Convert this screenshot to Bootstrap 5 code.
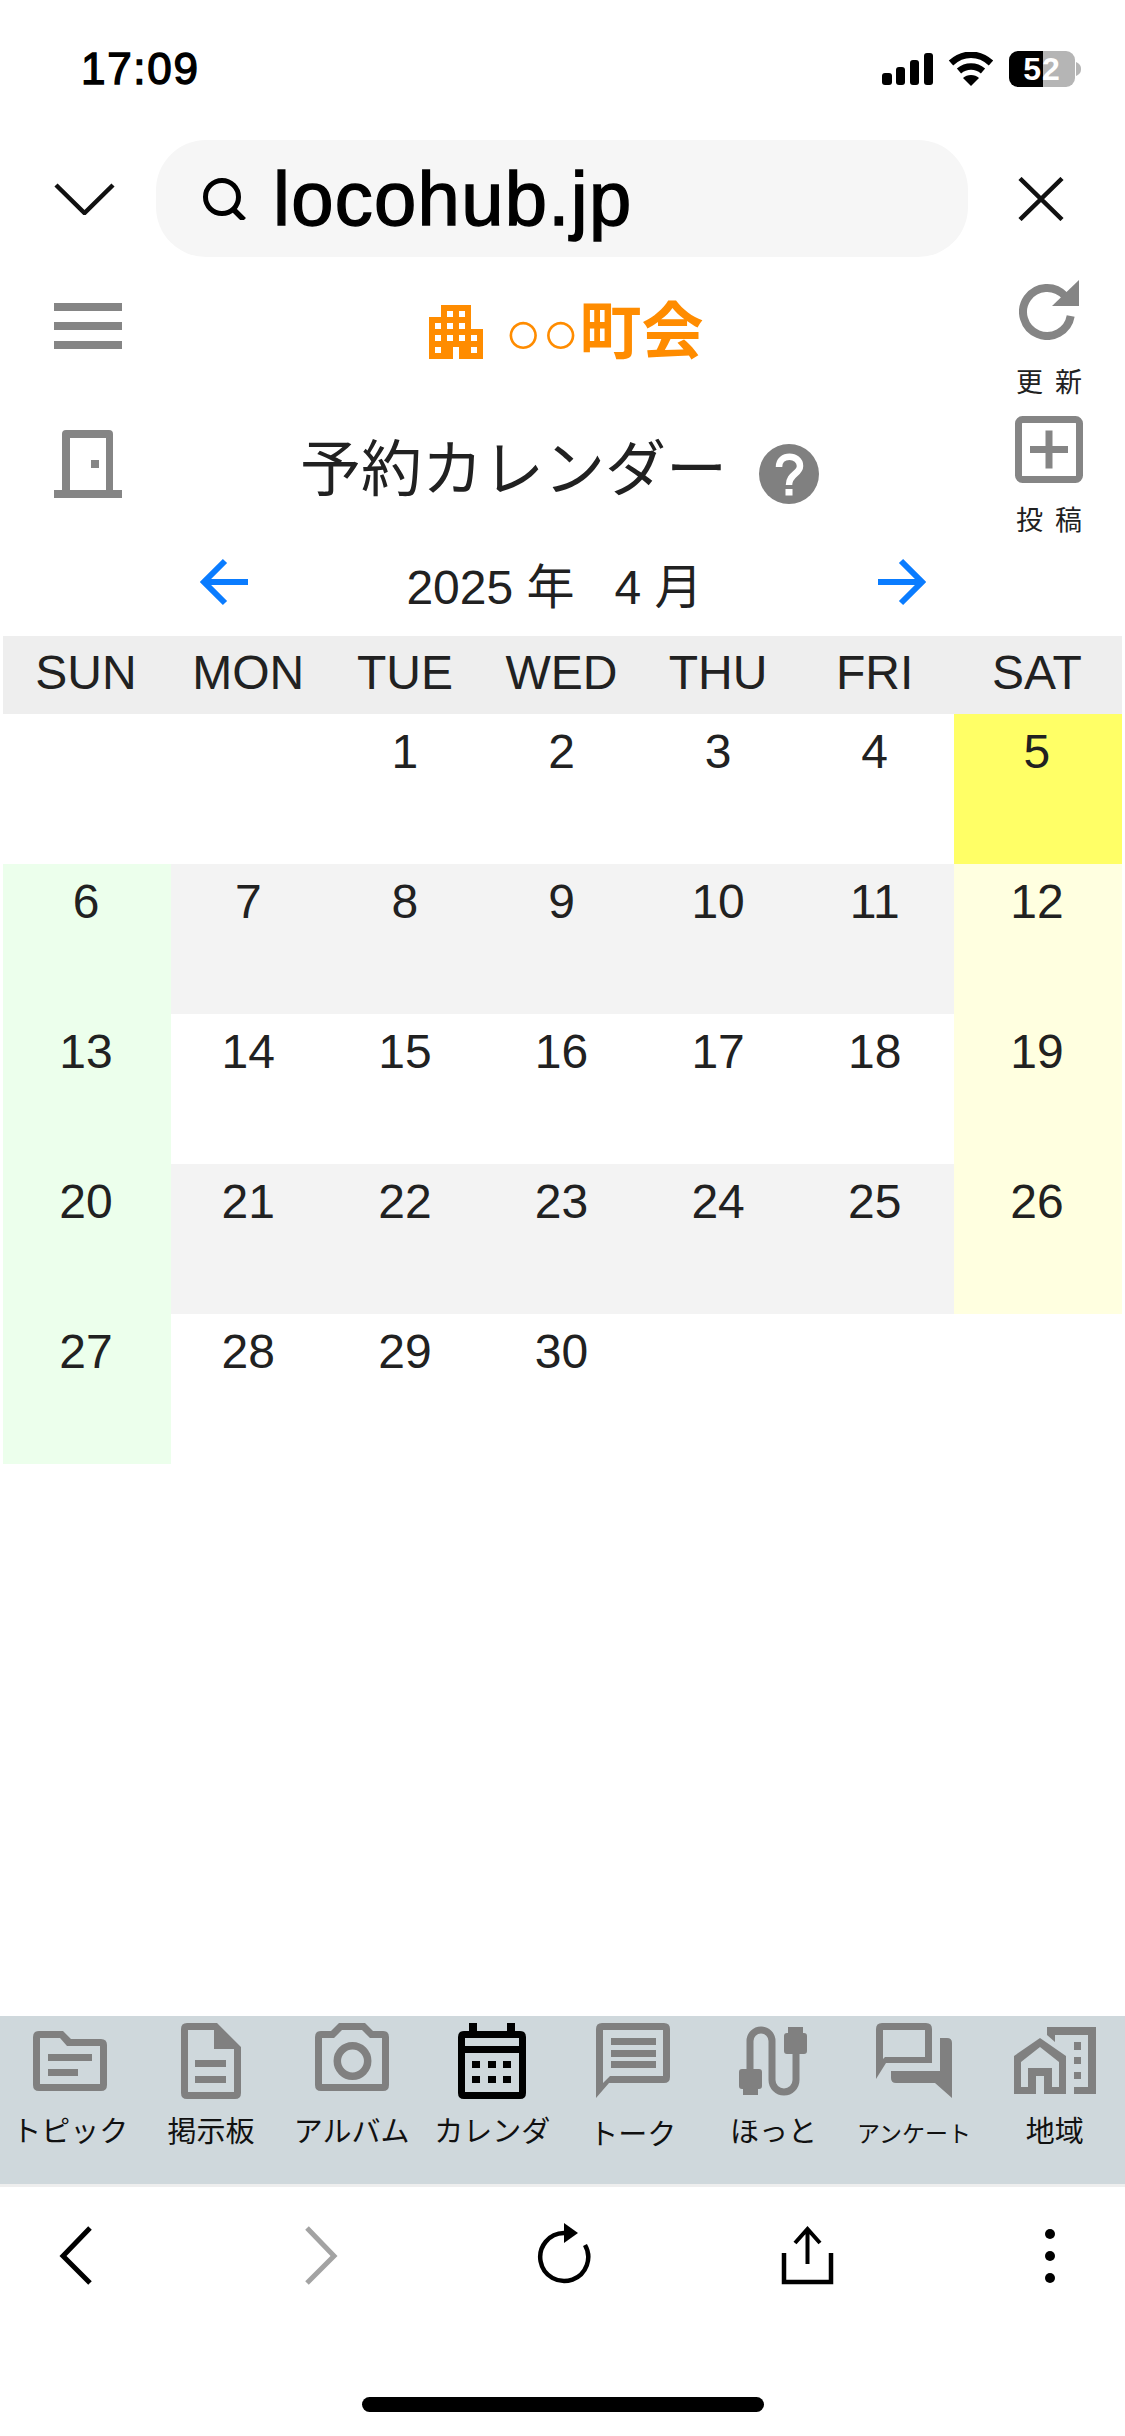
<!DOCTYPE html>
<html lang="ja">

<head>
    <meta charset="UTF-8">
    <meta name="viewport" content="width=device-width, initial-scale=1.0">
    <title>予約カレンダー</title>
    <link href="https://cdn.jsdelivr.net/npm/bootstrap@5.3.3/dist/css/bootstrap.min.css" rel="stylesheet">
    <script src="https://cdn.jsdelivr.net/npm/bootstrap@5.3.3/dist/js/bootstrap.bundle.min.js"></script>
    <style>
        html, body { height: 2436px; overflow: hidden; }
        body { font-family: "Liberation Sans", "Noto Sans CJK JP", sans-serif; color: #212121; background: #fff; }
        svg { display: block; flex: none; }
        .phone { width: 1125px; height: 2436px; }
        .status-bar { height: 138px; padding: 0 43px 0 81px; color: #000; }
        .status-time { font-size: 44px; line-height: 50px; letter-spacing: 1.7px; -webkit-text-stroke: 1.4px #000; }
        .status-icons { gap: 15px; }
        .battery-box { width: 66px; height: 36px; border-radius: 9px; overflow: hidden; font-size: 32px; font-weight: 700; line-height: 36px; text-align: center; letter-spacing: 1px; color: #fff; background: linear-gradient(90deg, #000 51%, #b5b5b5 51%); }
        .browser-bar { height: 117px; margin-top: 2px; padding-left: 54px; }
        .url-pill { width: 812px; height: 117px; margin: 0 50px 0 41px; padding-left: 46px; border-radius: 50px; background: #f6f6f6; }
        .url-text { font-size: 76px; color: #000; line-height: 1; margin-left: 26px; -webkit-text-stroke: 1.4px #000; letter-spacing: 1.3px; }
        .row-one { height: 148px; }
        .row-two { height: 135px; }
        .side-left { width: 176px; padding-left: 54px; }
        .side-right { width: 176px; padding-left: 24px; }
        .row-one .side-left { padding-top: 46px; }
        .row-one .side-right { padding-top: 23px; }
        .row-two .side-left { padding-top: 25px; }
        .row-two .side-right { padding-top: 11px; }
        .title-one { padding: 42px 0 0 7px; }
        .title-two { padding: 35px 6px 0 0; }
        .site-title { font-size: 62px; font-weight: 700; color: #ff8c00; line-height: 62px; margin: 3px 0 0 22px; white-space: nowrap; }
        .site-title .maru { font-weight: 400; }
        .side-label { font-size: 27px; letter-spacing: 12px; margin-right: -12px; line-height: 1; color: #212121; white-space: nowrap; }
        .label-update { margin-top: 30px; }
        .label-post { margin-top: 25px; }
        .page-title { font-size: 61px; line-height: 60px; color: #212121; margin: 0 32px 7px 0; white-space: nowrap; }
        .month-row { height: 96px; padding-bottom: 12px; font-size: 48px; color: #212121; }
        .month-text { width: 630px; padding: 12px 16px 0 0; text-align: center; white-space: pre; line-height: 1; }
        .cal-grid { display: grid; grid-template-columns: 168px repeat(5, 156.6px) 168px; margin: 0 3px; }
        .cal-head { height: 78px; padding-right: 2px; background: #eeeeee; font-size: 48px; line-height: 74px; text-align: center; color: #212121; }
        .cal-day { height: 150px; padding: 8px 2px 0 0; font-size: 48px; line-height: 60px; text-align: center; color: #212121; }
        .c-grey { background: #f3f3f3; }
        .c-sun { background: #ecffec; }
        .c-sat { background: #ffffe0; }
        .c-today { background: #ffff66; }
        .tab-bar { height: 171px; background: #cfd8dc; border-bottom: 3px solid #eeeeee; padding-top: 7px; }
        .tab-item { flex: 1 1 0; font-size: 29px; color: #111; text-align: center; line-height: 36px; min-width: 0; }
        .tab-item svg { margin: 0 auto; }
        .tab-label { margin-top: 15px; white-space: nowrap; }
        .tab-label-low { margin-top: 18px; }
        .tab-label-sm { font-size: 23px; margin-top: 17px; }
        .bottom-bar { height: 249px; padding: 36px 45px 24px 46px; }
        .home-line { width: 402px; height: 15px; border-radius: 8px; background: #000; }
    </style>
</head>

<body>
    <div class="phone d-flex flex-column">
        <div class="status-bar d-flex justify-content-between align-items-center">
            <div class="status-time">17:09</div>
            <div class="status-icons d-flex align-items-center">
                <svg width="51" height="32" viewBox="0 0 51 32"><g fill="#000"><rect x="0" y="20" width="10" height="12" rx="3"/><rect x="14" y="14" width="9" height="18" rx="3"/><rect x="28" y="7" width="9" height="25" rx="3"/><rect x="42" y="0" width="9" height="32" rx="3"/></g></svg>
                <svg width="46" height="34" viewBox="0 0 46 34"><path d="M3 11 C15 0 31 0 43 11" fill="none" stroke="#000" stroke-width="6.5"/><path d="M11 19 C18 13 28 13 35 19" fill="none" stroke="#000" stroke-width="6.5"/><path d="M15 26 L23 34 L31 26 C27 22 19 22 15 26 Z" fill="#000"/></svg>
                <div class="d-flex align-items-center ms-0">
                    <div class="battery-box">52</div>
                    <svg class="ms-0" width="7" height="14" viewBox="0 0 7 14"><path d="M1 0 C5 2 6 4 6 7 C6 10 5 12 1 14 Z" fill="#b5b5b5"/></svg>
                </div>
            </div>
        </div>

        <div class="browser-bar d-flex align-items-center">
            <svg width="61" height="32" viewBox="0 0 61 32"><path d="M2 2 L30.5 30 L59 2" fill="none" stroke="#111" stroke-width="4.5"/></svg>
            <div class="url-pill d-flex align-items-center">
                <svg width="45" height="42" viewBox="0 0 45 42"><circle cx="20" cy="19" r="16.500" fill="none" stroke="#000" stroke-width="5"/><path d="M31 31 L42 42" stroke="#000" stroke-width="5.500"/></svg>
                <span class="url-text">locohub.jp</span>
            </div>
            <svg width="46" height="44" viewBox="0 0 46 44"><path d="M2 1.500 L44 42.500 M44 1.500 L2 42.500" stroke="#111" stroke-width="4.500"/></svg>
        </div>

        <div class="row-one d-flex align-items-start">
            <div class="side-left">
                <svg width="68" height="46" viewBox="0 0 68 46"><g fill="#858585"><rect x="0" y="0" width="68" height="8"/><rect x="0" y="19" width="68" height="8"/><rect x="0" y="38" width="68" height="8"/></g></svg>
            </div>
            <div class="title-one flex-grow-1 d-flex justify-content-center align-items-center">
                <svg width="54" height="54" viewBox="0 0 54 54"><path fill-rule="evenodd" fill="#ff8c00" d="M12 0 H42 V24 H54 V54 H30 V42 H24 V54 H0 V12 H12 Z M18 6 V12 H24 V6 Z M30 6 V12 H36 V6 Z M6 18 V24 H12 V18 Z M18 18 V24 H24 V18 Z M30 18 V24 H36 V18 Z M6 30 V36 H12 V30 Z M18 30 V36 H24 V30 Z M30 30 V36 H36 V30 Z M42 30 V36 H48 V30 Z M6 42 V48 H12 V42 Z M42 42 V48 H48 V42 Z"/></svg>
                <span class="site-title"><span class="maru">○○</span>町会</span>
            </div>
            <div class="side-right d-flex flex-column align-items-center">
                <svg width="60" height="60" viewBox="0 0 60 60"><path d="M51.700 36 A24 24 0 1 1 45.800 15.800" fill="none" stroke="#858585" stroke-width="8"/><path d="M60 0 V26 H33 Z" fill="#858585"/></svg>
                <div class="side-label label-update">更新</div>
            </div>
        </div>

        <div class="row-two d-flex align-items-start">
            <div class="side-left">
                <svg width="68" height="68" viewBox="0 0 68 68"><path fill-rule="evenodd" fill="#858585" d="M12 0 H55 Q59 0 59 4 V60 H68 V68 H0 V60 H8 V4 Q8 0 12 0 Z M16 8 V60 H52 V8 Z"/><rect x="37" y="30" width="8" height="8" fill="#858585"/></svg>
            </div>
            <div class="title-two flex-grow-1 d-flex justify-content-center align-items-center">
                <span class="page-title">予約カレンダー</span>
                <svg width="60" height="60" viewBox="0 0 60 60"><circle cx="30" cy="30" r="30" fill="#808080"/><path d="M20 23 C20 9 41 10 41 22 C41 30 30 30 30 41" fill="none" stroke="#fff" stroke-width="6.500"/><rect x="26.500" y="45" width="7" height="6.500" fill="#fff"/></svg>
            </div>
            <div class="side-right d-flex flex-column align-items-center">
                <svg width="68" height="67" viewBox="0 0 68 67"><rect x="3.500" y="3.500" width="61" height="60" rx="4" fill="none" stroke="#858585" stroke-width="7"/><path d="M34 14.500 V52.500 M15 33.500 H53" stroke="#858585" stroke-width="7"/></svg>
                <div class="side-label label-post">投稿</div>
            </div>
        </div>

        <div class="month-row d-flex justify-content-center align-items-center">
            <svg width="48" height="48" viewBox="0 0 48 48"><path d="M48 24 H5 M25 3 L4 24 L25 45" fill="none" stroke="#0a7cff" stroke-width="6"/></svg>
            <div class="month-text">2025 年   4 月</div>
            <svg width="48" height="48" viewBox="0 0 48 48"><path d="M0 24 H43 M23 3 L44 24 L23 45" fill="none" stroke="#0a7cff" stroke-width="6"/></svg>
        </div>

        <div class="cal-grid" id="cal"></div>

        <div class="flex-grow-1"></div>

        <div class="tab-bar d-flex">
            <div class="tab-item"><svg width="74" height="76" viewBox="0 0 74 76"><path fill-rule="evenodd" fill="#808080" d="M6 8 H30 L38 16 H68 Q74 16 74 22 V62 Q74 68 68 68 H6 Q0 68 0 62 V14 Q0 8 6 8 Z M7 15 V61 H67 V23 H34 L27 15 Z"/><rect x="15" y="31" width="44" height="7" fill="#808080"/><rect x="15" y="46" width="30" height="7" fill="#808080"/></svg><div class="tab-label">トピック</div></div>
            <div class="tab-item"><svg width="60" height="76" viewBox="0 0 60 76"><path fill-rule="evenodd" fill="#808080" d="M6 0 H36 L60 24 V70 Q60 76 54 76 H6 Q0 76 0 70 V6 Q0 0 6 0 Z M7 7 V69 H53 V26 H33 V7 Z"/><rect x="14" y="37" width="31" height="7" fill="#808080"/><rect x="14" y="53" width="31" height="7" fill="#808080"/></svg><div class="tab-label">掲示板</div></div>
            <div class="tab-item"><svg width="74" height="76" viewBox="0 0 74 76"><path fill-rule="evenodd" fill="#808080" d="M24 0 H50 L58 8 H68 Q74 8 74 14 V62 Q74 68 68 68 H6 Q0 68 0 62 V14 Q0 8 6 8 H16 Z M7 15 V61 H67 V15 H55 L47 7 H27 L19 15 Z"/><circle cx="37.500" cy="38" r="15.200" fill="none" stroke="#808080" stroke-width="7.500"/></svg><div class="tab-label">アルバム</div></div>
            <div class="tab-item"><svg width="68" height="76" viewBox="0 0 68 76"><path fill-rule="evenodd" fill="#000" d="M11 0 H19 V8 H49 V0 H57 V8 H62 Q68 8 68 14 V70 Q68 76 62 76 H6 Q0 76 0 70 V14 Q0 8 6 8 H11 Z M7 15 V23 H61 V15 Z M7 30 V69 H61 V30 Z"/><g fill="#000"><rect x="14" y="38" width="8" height="7"/><rect x="30" y="38" width="8" height="7"/><rect x="45" y="38" width="8" height="7"/><rect x="14" y="53" width="8" height="7"/><rect x="30" y="53" width="8" height="7"/><rect x="45" y="53" width="8" height="7"/></g></svg><div class="tab-label">カレンダ</div></div>
            <div class="tab-item"><svg width="74" height="76" viewBox="0 0 74 76"><path fill-rule="evenodd" fill="#808080" d="M6 0 H68 Q74 0 74 6 V54 Q74 60 68 60 H13 L0 75 V6 Q0 0 6 0 Z M7 7 V60 L14 53 H67 V7 Z"/><g fill="#808080"><rect x="15" y="15" width="45" height="7"/><rect x="15" y="27" width="45" height="7"/><rect x="15" y="38" width="45" height="7"/></g></svg><div class="tab-label tab-label-low">トーク</div></div>
            <div class="tab-item"><svg width="68" height="76" viewBox="0 0 68 76"><g transform="translate(0 4)"><path d="M11 44 V14 A11 11 0 0 1 33 14 V53 A12 12 0 0 0 57 53 V25" fill="none" stroke="#808080" stroke-width="7"/><path fill="#808080" d="M3 42 H20 Q23 42 23 45 V59 Q23 62 20 62 H19 V68 H4 V62 H3 Q0 62 0 59 V45 Q0 42 3 42 Z M49 0 H64 V6 H65 Q68 6 68 9 V24 Q68 27 65 27 H48 Q45 27 45 24 V9 Q45 6 48 6 H49 Z"/></g></svg><div class="tab-label">ほっと</div></div>
            <div class="tab-item"><svg width="76" height="76" viewBox="0 0 76 76"><path fill-rule="evenodd" fill="#808080" d="M6 0 H50 Q56 0 56 6 V40 H10 L0 56 V6 Q0 0 6 0 Z M7 7 V36 L9 34 H49 V7 Z"/><path fill="#808080" d="M64 15 H71 Q76 15 76 20 V75 L59 60 H20 Q15 60 15 55 V48 H64 Z"/></svg><div class="tab-label tab-label-sm">アンケート</div></div>
            <div class="tab-item"><svg width="84" height="76" viewBox="0 0 84 76"><g transform="translate(0 4)" fill="#808080"><path d="M34 0 H83 V67 H61 V60 H75 V8 H42 V15 L34 8 Z"/><rect x="61" y="15" width="7" height="8"/><rect x="61" y="30" width="7" height="7"/><rect x="61" y="45" width="7" height="7"/><path fill-rule="evenodd" d="M27 11 L53 29 V67 H31 V49 H23 V67 H1 V29 Z M27 20 L8 35 V60 H15 V41 H39 V60 H46 V35 Z"/></g></svg><div class="tab-label">地域</div></div>
        </div>

        <div class="bottom-bar d-flex flex-column justify-content-between align-items-center">
            <div class="w-100 d-flex justify-content-between">
                <svg width="60" height="62" viewBox="0 0 60 62"><path d="M44 5 L17 33 L44 60" fill="none" stroke="#000" stroke-width="5"/></svg>
                <svg width="60" height="62" viewBox="0 0 60 62"><path d="M17 5 L44 33 L17 60" fill="none" stroke="#a3a3a3" stroke-width="5"/></svg>
                <svg width="60" height="62" viewBox="0 0 60 62"><path d="M52 22 A24 24 0 1 1 31 10" fill="none" stroke="#000" stroke-width="4.500"/><path d="M31 0 L45 10 L31 20 Z" fill="#000"/></svg>
                <svg width="60" height="62" viewBox="0 0 60 62"><path d="M7 30 V59 H54 V30" fill="none" stroke="#000" stroke-width="4.500"/><path d="M30.500 7 V41 M18 20 L30.500 6 L43 20" fill="none" stroke="#000" stroke-width="4"/></svg>
                <svg width="60" height="62" viewBox="0 0 60 62"><g fill="#000"><circle cx="30" cy="11" r="5"/><circle cx="30" cy="33" r="5"/><circle cx="30" cy="55" r="5"/></g></svg>
            </div>
            <div class="home-line"></div>
        </div>
    </div>

    <script>
        // build the calendar cells
        const grid = document.getElementById('cal');
        ['SUN', 'MON', 'TUE', 'WED', 'THU', 'FRI', 'SAT'].forEach(function (d) {
            grid.insertAdjacentHTML('beforeend', '<div class="cal-head">' + d + '</div>');
        });
        for (let i = 0; i < 35; i++) {
            const day = i - 1;
            const col = i % 7;
            const row = Math.floor(i / 7);
            let cls = 'cal-day';
            if (col === 0) {
                if (day > 0) cls += ' c-sun';
            } else if (col === 6) {
                if (day === 5) cls += ' c-today';
                else if (day <= 26) cls += ' c-sat';
            } else if (row % 2 === 1) {
                cls += ' c-grey';
            }
            const label = day > 0 && day <= 30 ? day : '';
            grid.insertAdjacentHTML('beforeend', '<div class="' + cls + '">' + label + '</div>');
        }
    </script>
</body>

</html>
